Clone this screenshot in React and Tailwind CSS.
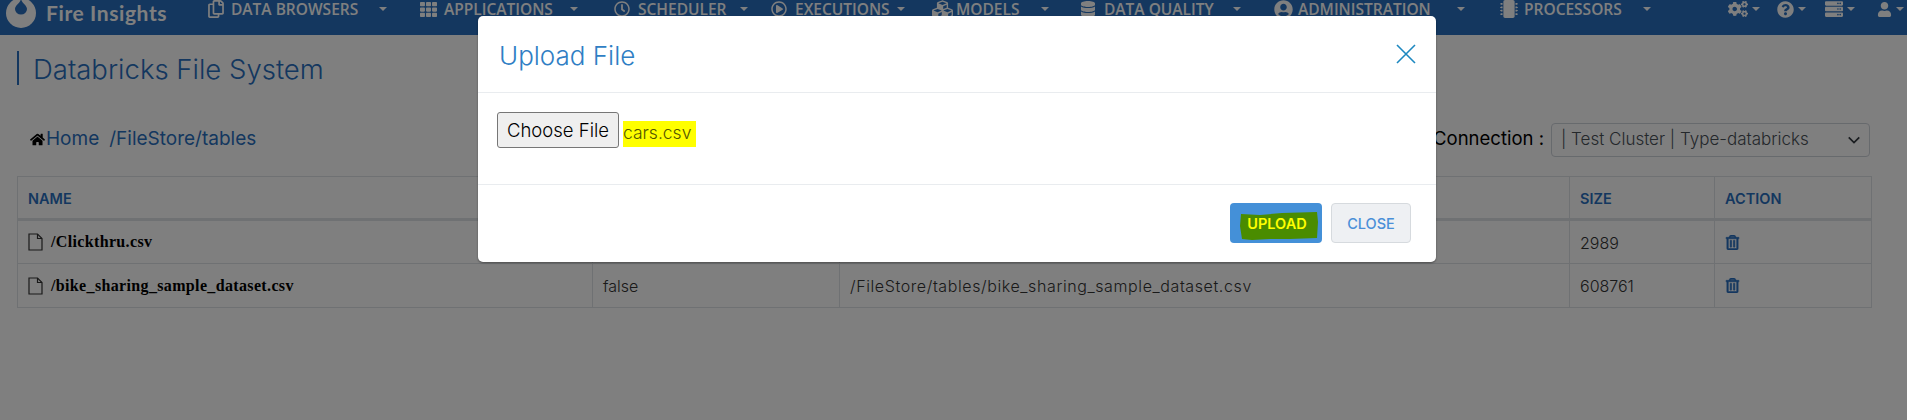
import React from "react";
import {
  FaRegCopy, FaTh, FaRegClock, FaRegPlayCircle, FaCubes, FaDatabase, FaUserCircle, FaMicrochip,
  FaCogs, FaQuestionCircle, FaServer, FaUser, FaHome, FaRegTrashAlt,
} from "react-icons/fa";

const sans = "font-['Inter','Lato',sans-serif] font-light";

const navItems = [
  { label: "DATA BROWSERS", Icon: FaRegCopy, width: "w-[213px]", text: "w-[148px]", icon: "text-[18px]" },
  { label: "APPLICATIONS", Icon: FaTh, width: "w-[194px]", text: "w-[126px]", icon: "text-[17px]" },
  { label: "SCHEDULER", Icon: FaRegClock, width: "w-[157px]", text: "w-[102px]", icon: "text-[16px]" },
  { label: "EXECUTIONS", Icon: FaRegPlayCircle, width: "w-[161px]", text: "w-[102px]", icon: "text-[16px]" },
  { label: "MODELS", Icon: FaCubes, width: "w-[148px]", text: "w-[85px]", icon: "text-[21px]" },
  { label: "DATA QUALITY", Icon: FaDatabase, width: "w-[194px]", text: "w-[129px]", icon: "text-[16px]" },
  { label: "ADMINISTRATION", Icon: FaUserCircle, width: "w-[226px]", text: "w-[159px]", icon: "text-[19px]" },
  { label: "PROCESSORS", Icon: FaMicrochip, width: "w-[228px]", text: "w-[119px]", icon: "text-[18px]" },
];

const utilItems = [
  { Icon: FaCogs, width: "w-[49px]", icon: "text-[20px]" },
  { Icon: FaQuestionCircle, width: "w-[48px]", icon: "text-[17px]" },
  { Icon: FaServer, width: "w-[52px]", icon: "text-[18px]" },
  { Icon: FaUser, width: "w-[30px]", icon: "text-[15px]" },
];

const rows = [
  { name: "/Clickthru.csv", dir: "false", path: "/FileStore/tables/Clickthru.csv", size: "2989" },
  { name: "/bike_sharing_sample_dataset.csv", dir: "false", path: "/FileStore/tables/bike_sharing_sample_dataset.csv", size: "608761" },
];

function Caret({ className = "" }) {
  return <span className={`inline-block w-0 h-0 border-x-[4px] border-x-transparent border-t-[4px] border-t-white ${className}`} />;
}

function FileIcon() {
  return (
    <svg width="15" height="18" viewBox="0 0 15 18" fill="none" stroke="#333" strokeWidth="1.2" className="shrink-0 mr-[8px]">
      <path d="M1 1h8.5L14 5.5V17H1z" />
      <path d="M9.5 1v4.5H14" />
    </svg>
  );
}

function Navbar() {
  return (
    <div className="flex h-[35px] bg-[#296fbf] text-white overflow-hidden">
      <div className="w-[207px] shrink-0 flex items-start pl-[6px]">
        <svg width="30" height="30" viewBox="0 0 30 30" className="-mt-[2px]">
          <circle cx="15" cy="15" r="15" fill="#fff" />
          <path d="M15 0 C15 5 9 7 9 11 a6 5.5 0 0 0 12 0 C21 7 15 5 15 0Z" fill="#296fbf" />
        </svg>
        <span className="ml-[10px] text-[21px] leading-[25px] font-bold tracking-[0.6px] font-['Lato',sans-serif]">Fire Insights</span>
      </div>
      {navItems.map(({ label, Icon, width, text, icon }) => (
        <div key={label} className={`${width} shrink-0 flex items-center h-[18px]`}>
          <span className="w-[24px] shrink-0 flex items-center">
            <Icon className={icon} />
          </span>
          <span className={`${text} shrink-0 whitespace-nowrap text-[15.5px] leading-[18px] font-semibold font-['Open_Sans',sans-serif]`}>{label}</span>
          <Caret />
        </div>
      ))}
      {utilItems.map(({ Icon, width, icon }, i) => (
        <div key={i} className={`${width} shrink-0 flex items-center h-[18px] gap-[4px]`}>
          <Icon className={icon} />
          <Caret />
        </div>
      ))}
    </div>
  );
}

function Page() {
  return (
    <div className={`px-[17px] ${sans}`}>
      <div className="mt-[16px] h-[34px] border-l-2 border-[#296fbf] pl-[14px] flex items-center text-[27.5px] text-[#296fbf] pt-[4px]">
        Databricks File System
      </div>

      <div className="mt-[38px] h-[34px] flex items-center justify-between w-[1856px]">
        <div className="flex items-center pl-[13px] pb-[2px] text-[19px] font-normal text-[#296fbf]">
          <FaHome className="text-[15px] text-black mr-[1px]" />
          <span>Home</span>
          <span className="ml-[10px]">/FileStore/tables</span>
        </div>
        <div className="flex items-center mr-[3px]">
          <span className="text-[18.5px] font-normal text-black mr-[7px] pb-[2px]">Connection :</span>
          <div className="w-[319px] h-[34px] border border-[#ced4da] rounded-[4px] bg-white flex items-center justify-between pl-[9px] pr-[8px] text-[17px] text-[#495057]">
            <span>| Test Cluster | Type-databricks</span>
            <svg width="14" height="14" viewBox="0 0 16 16" fill="none" stroke="#343a40" strokeWidth="2"><path d="M2 5l6 6 6-6" /></svg>
          </div>
        </div>
      </div>

      <table className="mt-[19px] w-[1854px] table-fixed border-collapse border border-[#dee2e6] text-[16px] text-[#333]">
        <colgroup>
          <col className="w-[575px]" />
          <col className="w-[247px]" />
          <col className="w-[730px]" />
          <col className="w-[145px]" />
          <col className="w-[157px]" />
        </colgroup>
        <thead>
          <tr className="h-[43px] border-b-[3px] border-[#dee2e6] text-left text-[14.5px] text-[#296fbf]">
            <th className="px-[10px] pt-[2px] border-r border-[#dee2e6] font-semibold">NAME</th>
            <th className="px-[10px] pt-[2px] border-r border-[#dee2e6] font-semibold">IS DIR</th>
            <th className="px-[10px] pt-[2px] border-r border-[#dee2e6] font-semibold">PATH</th>
            <th className="px-[10px] pt-[2px] border-r border-[#dee2e6] font-semibold">SIZE</th>
            <th className="px-[10px] pt-[2px] font-semibold">ACTION</th>
          </tr>
        </thead>
        <tbody>
          {rows.map((row) => (
            <tr key={row.name} className="h-[44px] border-b border-[#dee2e6]">
              <td className="px-[10px] border-r border-[#dee2e6]">
                <div className="flex items-center">
                  <FileIcon />
                  <span className="font-['Liberation_Serif',serif] font-bold text-[16px] tracking-[0.35px] text-black">{row.name}</span>
                </div>
              </td>
              <td className="px-[10px] pt-[1px] border-r border-[#dee2e6]">{row.dir}</td>
              <td className="px-[10px] pt-[1px] border-r border-[#dee2e6] tracking-[0.6px]">{row.path}</td>
              <td className="px-[10px] pt-[1px] border-r border-[#dee2e6]">{row.size}</td>
              <td className="px-[10px]">
                <FaRegTrashAlt className="text-[15px] text-[#296fbf] stroke-[20]" />
              </td>
            </tr>
          ))}
        </tbody>
      </table>
    </div>
  );
}

function UploadModal() {
  return (
    <div className={`absolute left-[478px] top-[16px] w-[958px] h-[246px] bg-white rounded-[5px] shadow-[0_1px_2px_rgba(0,0,0,0.4)] flex flex-col ${sans}`}>
      <div className="h-[77px] shrink-0 border-b border-[#e9ecef] flex items-center justify-between pl-[21px] pr-[20px]">
        <span className="text-[26px] text-[#2f7ec4] pt-[3px]">Upload File</span>
        <svg width="20" height="20" viewBox="0 0 20 20" stroke="#1d88c0" strokeWidth="1.6" fill="none"><path d="M1 1l18 18M19 1L1 19" /></svg>
      </div>
      <div className="h-[92px] shrink-0 border-b border-[#e9ecef] pl-[19px] pt-[19px] flex items-start">
        <button className="w-[122px] h-[36px] pt-[1px] bg-[#efefef] border border-[#767676] rounded-[3px] text-[18.5px] text-black">Choose File</button>
        <span className="ml-[4px] mt-[9px] h-[26px] w-[73px] bg-[#ffff00] text-[17.5px] leading-[23px] text-[#555500] whitespace-nowrap">cars.csv</span>
      </div>
      <div className="flex-1 flex justify-end pt-[18px] pr-[25px] gap-[9px]">
        <button className="relative w-[92px] h-[40px] pt-[1px] bg-[#4490d8] rounded-[4px] flex items-center justify-center">
          <svg width="78" height="28" viewBox="0 0 78 28" className="absolute left-[10px] top-[9px]">
            <path d="M1 2 L20 3 L42 1 L77 0 L78 10 L77 26 L50 27 L30 27 L12 28 L2 27 L0 14Z" fill="#4a8c00" />
          </svg>
          <span className="relative pl-[2px] text-[14.5px] font-semibold text-[#ffff00]">UPLOAD</span>
        </button>
        <button className="w-[80px] h-[40px] pt-[1px] bg-[#eef0f3] border border-[#d6dade] rounded-[4px] text-[14.5px] font-medium text-[#4a8fd8]">CLOSE</button>
      </div>
    </div>
  );
}

export default function App() {
  return (
    <div className="relative h-[420px] bg-white overflow-hidden">
      <Navbar />
      <Page />
      <div className="absolute inset-0 bg-black/50" />
      <UploadModal />
    </div>
  );
}
